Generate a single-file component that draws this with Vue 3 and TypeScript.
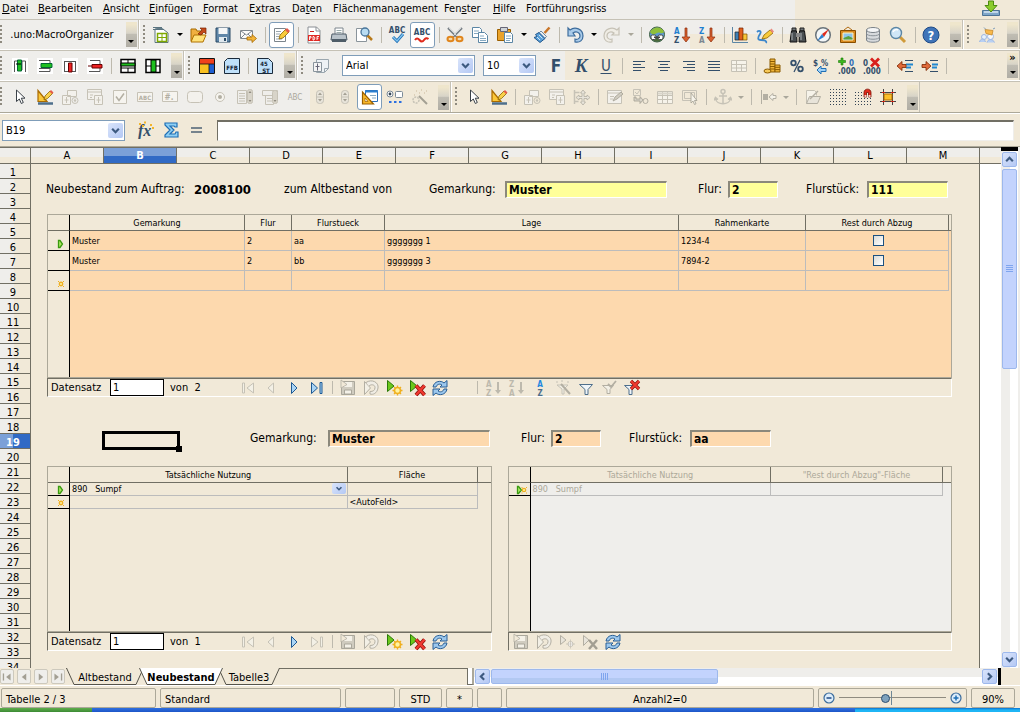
<script setup lang="ts">
import { ref } from 'vue'

interface Tool {
  kind: 'icon' | 'sep'
  name?: string
  label?: string
  active?: boolean
  arrow?: boolean
  dim?: boolean
}

const G = '#c6c2b6'
const D = '#334f6b'

const icons: Record<string, string> = {
  newDoc: `<path d="M1 1h8l2 2v3" fill="#6f8794"/><path d="M3 3h8l5 4v9.500H3z" fill="#fff" stroke="#5b7480"/><path d="M1 1.500h9M1 3.500h11" stroke="#5b7480"/><path d="M5.500 7.500h9v8h-9z" fill="#fff" stroke="#7fa800" stroke-width="1.500"/><path d="M5 11.500h9M10 8v8" stroke="#7fa800"/>`,
  open: `<path d="M2 15V3h5l1 2h5v10z" fill="#f0b040" stroke="#a66a00"/><path d="M2 16l3-7h12l-3 7z" fill="#ffe27a" stroke="#b07000"/><path d="M9 8l4-4-2-2h6v6l-2-2-3 3z" fill="#c44a1a" stroke="#7a2400" stroke-width=".7"/>`,
  save: `<path d="M2 2h14v14H2z" fill="#5f86a8" stroke="#2b4a66"/><path d="M4.500 2h9v6h-9z" fill="#f4f6f7"/><path d="M5 11h8v5H5z" fill="#dfe8ee"/><path d="M10 12h2v3h-2z" fill="#2b4a66"/>`,
  saveDim: `<path d="M2.500 2.500h13v13h-13z" fill="#d0ccc0" stroke="#aaa79b"/><path d="M5 3h8v5H5z" fill="#f4f1e8"/><path d="M5.500 11h7v4h-7z" fill="#f4f1e8" stroke="#aaa79b"/><path d="M2 1l6 4.500L2 9z" fill="#f1e9d8" stroke="#b3afa3" stroke-width=".8"/>`,
  mail: `<path d="M1.500 4.500h12v8h-12z" fill="#fbfbfb" stroke="#808890"/><path d="M2 5l5.500 4L13 5M2 12l4-4M13 12L9 8" fill="none" stroke="#808890"/><path d="M8 11h5V8.500l4.500 4-4.500 4V14H8z" fill="#f3b53a" stroke="#a86a00" stroke-width=".8"/>`,
  edit: `<path d="M2.500 2.500h11v13h-11z" fill="#fff" stroke="#7b858c"/><path d="M4 5.500h5M4 8h4M4 10.500h3M4 13h6" stroke="#9aa6ae"/><path d="M7 13l1-4 6-6 3 3-6 6z" fill="#f8ca3a" stroke="#8d6500" stroke-width=".8"/><path d="M13 4l2-2 3 3-2 2z" fill="#e4594a"/>`,
  pdf: `<path d="M3 1h8.500L15 4.500V17H3z" fill="#fff" stroke="#8a8f94"/><path d="M11 1v4h4" fill="none" stroke="#8a8f94"/><path d="M5 5.500h4" stroke="#c22"/><path d="M3 9h12v6H3z" fill="#e02a24"/><path d="M4.500 14v-3.500H6V12H4.500M8 14v-3.500h1L10 12l-1 2zM12 14v-3.500h2M12 12.200h1.500" stroke="#fff" fill="none" stroke-width=".9"/>`,
  print: `<path d="M5 2h8v8H5z" fill="#fff" stroke="#7c868d"/><path d="M6.500 4.500h5M6.500 6.500h5" stroke="#9aa"/><path d="M2 8h14l1 6H1z" fill="#b9c3ca" stroke="#4e5d68"/><path d="M2 13h14v3H2z" fill="#4e5d68"/>`,
  preview: `<path d="M1.500 2.500h10v13h-10z" fill="#fff" stroke="#8a949b"/><path d="M12 9l5 5" stroke="#b87a1a" stroke-width="2.500"/><circle cx="10" cy="6" r="4" fill="#b8dcf2" stroke="#47749a" stroke-width="1.300"/>`,
  cut: `<path d="M2 2l9 9M16 2l-9 9" stroke="#7b8288" stroke-width="2.200"/><path d="M3 2l8 8M15 2l-8 8" stroke="#e6e9eb" stroke-width=".8"/><ellipse cx="4.500" cy="13" rx="3" ry="2.300" fill="#f6d9a8" stroke="#e0851c" stroke-width="2"/><ellipse cx="13.500" cy="13" rx="3" ry="2.300" fill="#f6d9a8" stroke="#e0851c" stroke-width="2"/>`,
  copy: `<path d="M1.500 1.500h7l2 2v8h-9z" fill="#fff" stroke="#5b86a5"/><path d="M3 5h5M3 7.500h5" stroke="#86a9c1"/><path d="M7.500 6.500h6l3 3v7h-9z" fill="#fff" stroke="#5b86a5"/><path d="M9 10h4M9 12.500h6M9 14.500h6" stroke="#86a9c1"/>`,
  paste: `<path d="M1.500 3.500h13v11h-13z" fill="#eaa32b" stroke="#9b5f00"/><path d="M4.500 1.500h7v4h-7z" fill="#cfd4d7" stroke="#667"/><path d="M8.500 6.500h6l2 2v8h-8z" fill="#fff" stroke="#5b86a5"/><path d="M10 10h5M10 12.500h5M10 14.500h4" stroke="#86a9c1"/>`,
  brush: `<path d="M11.500 7l5-5.500" stroke="#c9762a" stroke-width="2.500"/><path d="M8 5l5.500 5.500-2 2L6 7z" fill="#e9edf0" stroke="#4e6f8c" stroke-width=".8"/><path d="M6 6.500l6 6-5 4-6-5 3-1-1.500-2z" fill="#5aa0d8" stroke="#20568c"/><path d="M4 11l3 3M6 9l3.500 3.500" stroke="#cfe6f7"/>`,
  undo: `<path d="M2 2l2 2c5-4 13-1 13 6 0 4-3 7-8 6v-3c3 1 5-1 5-3 0-4-4-5-7-3l2 3H2z" fill="#a9cbea" stroke="#3c6c9c" stroke-width="1.200"/>`,
  redo: `<path d="M16 2l-2 2C9 0 1 3 1 10c0 4 3 7 8 6v-3c-3 1-5-1-5-3 0-4 4-5 7-3L9 9h7z" fill="#f0ede5" stroke="${G}" stroke-width="1.200"/>`,
  globe: `<circle cx="9" cy="8.500" r="7.500" fill="#5f9ad0" stroke="#3d5d3d"/><path d="M2 6c3-6 12-6 14 0-3 3-4-1-7 1S4 9 2 6z" fill="#8fc03a"/><path d="M3 12c3-2 9-2 12 0-3 5-9 5-12 0z" fill="#4a6a3a"/><rect x="3" y="9" width="5" height="4.500" rx="1.500" fill="#fff" stroke="#444"/><rect x="10" y="9" width="5" height="4.500" rx="1.500" fill="#fff" stroke="#444"/><path d="M6 11.300h6" stroke="#444" stroke-width="1.500"/>`,
  sortAZ: `<text x="1" y="8" class="g" fill="#1f7fd0">A</text><text x="1" y="17" class="g" fill="#334f6b">Z</text><path d="M12 2h2v9h3l-4 5-4-5h3z" fill="#d9612e" stroke="#8a2d0c" stroke-width=".7"/>`,
  sortZA: `<text x="1" y="8" class="g" fill="#1f7fd0">Z</text><text x="1" y="17" class="g" fill="#7c8791">A</text><path d="M12 2h2v9h3l-4 5-4-5h3z" fill="#d9612e" stroke="#8a2d0c" stroke-width=".7"/>`,
  chart: `<path d="M1.500 1v15.500H17" fill="none" stroke="#5b86a5"/><path d="M4 6h4v8H4z" fill="#3c7fb5" stroke="#222" stroke-width=".7"/><path d="M8 2h4v12H8z" fill="#e0601c" stroke="#702000" stroke-width=".7"/><path d="M12 8h4v6h-4z" fill="#f8c63a" stroke="#805000" stroke-width=".7"/>`,
  draw: `<path d="M1 6c2-2 5-1 3 2s-3 6 1 6 6 1 5 3" fill="none" stroke="#3c87cc" stroke-width="1.800"/><path d="M6 13l2-4 6-5 3 3-6 5z" fill="#f8ca3a" stroke="#8d6500" stroke-width=".8"/><path d="M14 4l1.500-1.500 2.500 3L16.500 7z" fill="#e98a80"/>`,
  binoc: `<path d="M3 2h4v3H3zM11 2h4v3h-4z" fill="#6f7477" stroke="#222"/><path d="M2.500 5h5L8 16H1zM10.500 5h5L17 16h-7z" fill="#4a4f52" stroke="#111"/><path d="M7 7h4v4H7z" fill="#888"/><path d="M3 7v7M12 7v7" stroke="#aeb4b7"/>`,
  compass: `<circle cx="9" cy="9" r="7.300" fill="#f3f6f8" stroke="#6a747b" stroke-width="1.500"/><path d="M15 3l-5 8-2-3z" fill="#e02a1c"/><path d="M3 15l5-7 2 3z" fill="#2b7fd0"/>`,
  gallery: `<path d="M5 4l4-3 4 3" fill="none" stroke="#b06a10"/><path d="M1.500 4.500h15v12h-15z" fill="#d98b20" stroke="#8a4f00"/><path d="M4 7h10v7H4z" fill="#8fc4ea" stroke="#fff3c0"/><path d="M4.500 13.500v-1.500l5-2 4 2v1.500z" fill="#5aa03c"/>`,
  db: `<path d="M2.500 4v10c0 3 13 3 13 0V4z" fill="#d7dadd" stroke="#7b8288"/><ellipse cx="9" cy="4" rx="6.500" ry="2.500" fill="#f5f6f7" stroke="#7b8288"/><path d="M2.500 7.500c0 3 13 3 13 0M2.500 11c0 3 13 3 13 0" fill="none" stroke="#8d949a"/>`,
  zoom: `<path d="M11 11l5 5" stroke="#d09a3a" stroke-width="3"/><circle cx="7" cy="7" r="5.500" fill="#cfe6f7" stroke="#5b86a5" stroke-width="1.400"/><path d="M4 6c1-2 3-3 5-2" stroke="#fff" fill="none" stroke-width="1.500"/>`,
  help: `<circle cx="9" cy="9" r="8" fill="#3f74b8" stroke="#1f4a86"/><text x="9" y="14" text-anchor="middle" class="b" fill="#fff">?</text>`,
  ext: `<circle cx="6" cy="11" r="2.500" fill="#e8f2fb" stroke="#9db8e4"/><circle cx="12.500" cy="10.500" r="3" fill="#f4f8fd" stroke="#9db8e4"/><path d="M1.500 16c1-4 5-4 6 0M9 16.500c1-4 6-4 7.500 0" fill="#b8d0f4" stroke="#9db8e4"/><path d="M7 3.500l8 1-1 4.500-6-1.500z" fill="#f8b84a" stroke="#c98a2a" stroke-width=".8"/><path d="M6 1.500l2 2M15 3l2-1" stroke="#7f9db9"/>`,
  download: `<path d="M.5 11.500h17v5H.5z" fill="#7fa6c9" stroke="#4d7396"/><path d="M2 13h14" stroke="#d7e6f2" stroke-width="1.500"/><path d="M6.500 2h5v4.500H15L9 13 3 6.500h3.500z" fill="#8ccc2c" stroke="#4c8a10"/>`,
  colIns: `<path d="M1 1h16v16H1z" fill="#fff"/><path d="M3.500 15V4h11v11M7 4v9M11 4v9" fill="none" stroke="#555"/><path d="M6.500 3h4v11h-4z" fill="#1fc01f" stroke="#063"/><path d="M5 7h5" stroke="#000"/>`,
  rowIns: `<path d="M1 1h16v16H1z" fill="#fff"/><path d="M3 3.500h11v3M3 14.500h11v-4M3 11.500h11" fill="none" stroke="#555"/><path d="M5 6.500h11v4H5z" fill="#1fc01f" stroke="#063"/>`,
  colDel: `<path d="M1 1h16v16H1z" fill="#fff"/><path d="M3.500 4v11M14.500 4v11M3.500 4.500h11M3 14.500h11" fill="none" stroke="#555"/><path d="M7.500 6h3.500v9H7.500z" fill="#e22" stroke="#600"/>`,
  rowDel: `<path d="M1 1h16v16H1z" fill="#fff"/><path d="M4 3.500h10v11H3" fill="none" stroke="#555"/><path d="M6 7.500h10v3.500H6z" fill="#e22" stroke="#600"/><path d="M2 9h4" stroke="#600"/>`,
  rowSel: `<path d="M2 2.500h14v13H2z" fill="#fff" stroke="#000" stroke-width="1.500"/><path d="M2 6h14v3H2zM2 11h14" fill="#1fc01f" stroke="#000"/><path d="M9 2v4M9 11v5" stroke="#000"/>`,
  colSel: `<path d="M2 2.500h14v13H2z" fill="#fff" stroke="#000" stroke-width="1.500"/><path d="M7 3h5v12H7z" fill="#1fc01f" stroke="#000"/><path d="M2 9h5M12 9h4" stroke="#000"/>`,
  fill: `<path d="M1.500 1.500h15v15h-15z" fill="#fff" stroke="#111"/><path d="M2 2h14v5H2z" fill="#f0401c"/><path d="M2 7h9v9H2z" fill="#f8c020"/><path d="M11 7h5v9h-5z" fill="#1f5fd0"/><path d="M2 7h14M11 7v9" stroke="#111" stroke-width=".8"/>`,
  ffb: `<path d="M4.500 1.500h12v15h-15v-12z" fill="#bfe0fa" stroke="#1a2a3a"/><text x="9" y="13" text-anchor="middle" class="s" fill="#123">FFB</text>`,
  doc45: `<path d="M1.500 1.500h11l4 4v11h-15z" fill="#bfe0fa" stroke="#1a2a3a"/><text x="8" y="8.500" text-anchor="middle" class="s" fill="#123">45</text><text x="10" y="15.500" text-anchor="middle" class="s" fill="#123">ST</text>`,
  formDoc: `<path d="M4.500 2.500h12v9l-4 4h-8z" fill="#eef2f5" stroke="#9aa6ae"/><path d="M12.500 15v-3.500h4" fill="none" stroke="#9aa6ae"/><path d="M1.500 5.500h8v9h-8z" fill="#f4f4f4" stroke="#89949c"/><path d="M5.500 6.500v7M3.500 9.500h4" stroke="#667"/>`,
  alignL: `<path d="M3 4.500h12M3 7.500h8M3 10.500h12M3 13.500h8" stroke="${D}"/>`,
  alignC: `<path d="M3 4.500h12M5 7.500h8M3 10.500h12M5 13.500h8" stroke="${D}"/>`,
  alignR: `<path d="M3 4.500h12M7 7.500h8M3 10.500h12M7 13.500h8" stroke="${D}"/>`,
  alignJ: `<path d="M3 4.500h12M3 7.500h12M3 10.500h12M3 13.500h12" stroke="${D}"/>`,
  tableDim: `<path d="M1.500 3.500h15v11h-15zM1.500 7.500h15M1.500 11h15M6.500 3v12M11.500 7v7" fill="#f6f3ea" stroke="${G}"/>`,
  coins: `<path d="M7 2h5v13H7z" fill="#f0b53a" stroke="#8a5a00"/><path d="M7 4.500h5M7 7h5M7 9.500h5M7 12h5" stroke="#8a5a00"/><ellipse cx="4.500" cy="14" rx="3.500" ry="2" fill="#f6c95a" stroke="#8a5a00"/><path d="M12 8h5v7h-5z" fill="#f0b53a" stroke="#8a5a00"/><path d="M12 10.300h5M12 12.600h5" stroke="#8a5a00"/>`,
  percent: `<circle cx="5.500" cy="6" r="2.300" fill="none" stroke="${D}" stroke-width="1.800"/><circle cx="12.500" cy="12" r="2.300" fill="none" stroke="${D}" stroke-width="1.800"/><path d="M12 3L6 15" stroke="${D}" stroke-width="1.300"/>`,
  stdFmt: `<text x="0" y="8.500" class="g" fill="${D}">$</text><text x="8" y="8.500" class="g" fill="${D}">%</text><path d="M4 13l4-4v2.500h5v3H8V17z" fill="#9fd0f5" stroke="#1f6fb5"/>`,
  decAdd: `<path d="M3 1h2v2.500h2.500v2H5V8H3V5.500H.5v-2H3z" fill="#3cb81c" stroke="#1a7a08" stroke-width=".6"/><text x="11" y="9" class="g" fill="#2f6fb8">0</text><text x="0" y="17" class="s7" fill="${D}">.000</text>`,
  decDel: `<text x="0" y="9" class="g" fill="${D}">0</text><text x="0" y="17" class="s7" fill="${D}">.000</text><path d="M8 1.500l8 8M16 1.500l-8 8" stroke="#d8201c" stroke-width="2.800"/>`,
  outdent: `<path d="M9 3.500h8M9 14.500h8" stroke="${D}"/><path d="M10 7.500h7M10 10.500h5" stroke="#1f87d0" stroke-width="2"/><path d="M1 9l5-4.500v3h4v3H6v3z" fill="#e06a3a" stroke="#7a2400" stroke-width=".8"/>`,
  indent: `<path d="M9 3.500h8M9 14.500h8" stroke="${D}"/><path d="M11 7.500h6M11 10.500h5" stroke="#1f87d0" stroke-width="2"/><path d="M10 9L5 4.500v3H1v3h4v3z" fill="#e06a3a" stroke="#7a2400" stroke-width=".8"/>`,
  cursor: `<path d="M5.500 2v11.500l2.800-2.500 2 4.500 2-1-2-4.300h3.700z" fill="#fff" stroke="#3a4148"/>`,
  design: `<path d="M2 15.500h15" stroke="#4e6f8c" stroke-width="2.500"/><path d="M2 13.500V2.500l9 11z" fill="#fbc73a" stroke="#a86a00" stroke-width="1.200"/><path d="M8 12l1-4 5-5 2.500 2.500-5 5z" fill="#f8d04a" stroke="#8d6500" stroke-width=".8"/><path d="M13.500 3.500L15 2l2.500 2.500L16 6z" fill="#e4594a"/>`,
  ctrl: `<path d="M6.500 2.500h9v6h-9zM1.500 7.500h8v9h-8zM5.500 9v6M3.500 12h4" fill="#f3f1ec" stroke="${G}"/><circle cx="14" cy="12.500" r="3" fill="none" stroke="${G}"/><circle cx="14" cy="12.500" r="1.200" fill="${G}"/>`,
  form: `<path d="M1.500 1.500h14v10h-14zM1.500 4h14M4 7h3M4 9.500h2" fill="#f3f1ec" stroke="${G}"/><path d="M8.500 7.500h8v9h-8zM12.500 9v6M10.500 12h4" fill="#f3f1ec" stroke="${G}"/>`,
  check: `<path d="M2.500 2.500h13v13h-13z" fill="#f6f4ef" stroke="${G}"/><path d="M5 8.500l3 4 5-7" fill="none" stroke="#b3afa3" stroke-width="1.500"/>`,
  abcBox: `<path d="M1.500 4.500h15v9h-15z" fill="#f6f4ef" stroke="${G}"/><text x="9" y="11.500" text-anchor="middle" class="s" fill="#b3afa3">ABC</text>`,
  numBox: `<path d="M1.500 3.500h15v10h-15z" fill="#f6f4ef" stroke="${G}"/><text x="8" y="11.500" text-anchor="middle" class="g" fill="#b3afa3">#.</text>`,
  btn: `<rect x="1.500" y="3.500" width="15" height="11" rx="3" fill="#f3f1ec" stroke="${G}"/>`,
  radio: `<circle cx="9" cy="9" r="4.500" fill="#f6f4ef" stroke="${G}"/><circle cx="9" cy="9" r="2" fill="#b3afa3"/>`,
  listBox: `<path d="M1.500 2.500h9v13h-9zM3 5.500h6M3 8h6M3 10.500h6M3 13h6" fill="none" stroke="${G}"/><rect x="11.500" y="1.500" width="5" height="14" rx="2" fill="#d8d4c9" stroke="${G}"/><path d="M12.500 5l1.500-2 1.500 2zM12.500 12l1.500 2 1.500-2z" fill="#8f8b80"/>`,
  combo: `<path d="M1.500 2.500h15v5h-15zM4.500 7.500v9h8v-9M6 10.500h5M6 13h5" fill="none" stroke="${G}"/><rect x="11.500" y="2.500" width="5" height="13" rx="2" fill="#d8d4c9" stroke="${G}"/><path d="M12.500 12l1.500 2 1.500-2z" fill="#8f8b80"/>`,
  abc: `<text x="9" y="12" text-anchor="middle" class="m" fill="#aaa79b">ABC</text>`,
  spin: `<rect x="5.500" y="2.500" width="7" height="13" rx="3" fill="#e8e4da" stroke="${G}"/><path d="M5 9h8" stroke="${G}"/><path d="M7 7l2-2.500L11 7zM7 11l2 2.500 2-2.500z" fill="#a39f93"/>`,
  designOn: `<path d="M4.500 2.500h12v11h-12z" fill="#fff" stroke="#2b6fb8"/><path d="M4 3.500h13" stroke="#2b7fd0" stroke-width="2"/><path d="M9 7.500h6M11 10h4" stroke="#86a9c1"/><path d="M1.500 16V4l11 12z" fill="#f8b82a" stroke="#9b5f00" stroke-width="1.200"/><path d="M4 13.500V10l3 3.500z" fill="#fff" stroke="#9b5f00" stroke-width=".7"/>`,
  more: `<circle cx="4" cy="6" r="3" fill="#fff" stroke="#7b8a96"/><circle cx="4" cy="6" r="1.400" fill="#345"/><rect x="9.500" y="3.500" width="7" height="6" rx="1" fill="#fff" stroke="#7b8a96"/><path d="M3 14h2.500M8 14h2.500M13 14h2.500" stroke="#2b6fe0" stroke-width="2"/>`,
  wand: `<path d="M8 8l8 8" stroke="#a39f93" stroke-width="2"/><path d="M5 3h1M10 2h1M13 5h1M3 7h1M8 5h1M15 3h1" stroke="#c9b89a" stroke-width="1.200"/><circle cx="5" cy="12" r="3" fill="none" stroke="${G}" stroke-width="1.500" stroke-dasharray="2 1"/>`,
  move: `<path d="M1.500 2v14M1.500 4.500h5M1.500 13.500h4" stroke="${G}" stroke-width="1.500"/><path d="M10 2l2.500 3H11v3.500h3V7l3 2.500-3 2.500v-1.500h-3V14h1.500L10 17l-2.500-3H9v-3.500H6V12L3 9.500 6 7v1.500h3V5H7.500z" fill="#e8e4da" stroke="#b3afa3" stroke-width=".8"/>`,
  formPen: `<path d="M1.500 2.500h14v13h-14zM1.500 5h14M4 8.500h4M4 11h3" fill="#f3f1ec" stroke="${G}"/><path d="M7 13l2-4 6-5 2 2-6 5z" fill="#d0ccc0" stroke="#a39f93" stroke-width=".8"/>`,
  tabOrder: `<path d="M2.500 1.500h7v6h-7zM4 4l2 2 3-4" fill="none" stroke="${G}"/><path d="M3 9v4h6v2.500l3-3.500-3-3.500V11H5V9z" fill="#d8d4c9" stroke="#a39f93" stroke-width=".8"/><circle cx="14.500" cy="13" r="2.500" fill="none" stroke="#b3afa3"/>`,
  addField: `<path d="M1.500 3.500h15v12h-15zM1.500 7.500h15M1.500 11.500h15M6.500 3.500v12M11.500 3.500v12" fill="#f6f3ea" stroke="${G}"/><path d="M2 5.500h14" stroke="#d8d4c9" stroke-width="2"/>`,
  selDim: `<path d="M1.500 2.500h14v10h-14zM3.500 4.500h10v6h-10z" fill="none" stroke="${G}"/><path d="M10 5v10l2-2 1.500 3.500 1.500-.7-1.500-3.300H16z" fill="#f6f3ea" stroke="#a39f93" stroke-width=".8"/>`,
  anchor: `<circle cx="9" cy="3.500" r="2" fill="none" stroke="${G}" stroke-width="1.500"/><path d="M9 5.500V16M5 8h8M1.500 10.500c1 7 14 7 15 0M0 12.500l1.500-3 2.500 2M18 12.500l-1.500-3-2.500 2" fill="none" stroke="${G}" stroke-width="1.500"/>`,
  alignObj: `<path d="M2.500 2v14" stroke="#b3afa3"/><path d="M4 6h5v6H4z" fill="#b3afa3"/><path d="M10 9l4-3.500v2h3v3h-3v2z" fill="#f6f3ea" stroke="#b3afa3"/>`,
  folderDim: `<path d="M2.500 15.500v-13h8l2 2v3" fill="#f6f3ea" stroke="${G}"/><path d="M2.500 15.500l3-7h11l-3 7z" fill="#e8e4da" stroke="#b3afa3"/><path d="M6 11l8-8" stroke="#b3afa3" stroke-width="1.500"/>`,
  gridPts: `<path d="M1 1.500h16M1 4.500h16M1 7.500h16M1 10.500h16M1 13.500h16M1 16.500h16" stroke="#345" stroke-dasharray="1 2"/>`,
  gridSnap: `<path d="M1 4.500h8M1 7.500h8M1 10.500h16M1 13.500h16M1 16.500h16" stroke="#345" stroke-dasharray="1 2"/><path d="M10 9V4.500c0-4.500 7-4.500 7 0V9h-2.500V4.500h-2V9z" fill="#e02a1c" stroke="#7a0c00" stroke-width=".8"/><path d="M10.500 8h2M14.500 8h2" stroke="#fff" stroke-width="1.500"/>`,
  guides: `<path d="M1 4.500h16M1 13.500h16M4.500 1v16M13.500 1v16" stroke="#444"/><path d="M5 6h8v6H5z" fill="#fbc02a" stroke="#b06a00"/><path d="M3 4.500h3M12 4.500h3M3 13.500h3M12 13.500h3" stroke="#d02010"/>`,
  spell: `<text x="9" y="7" text-anchor="middle" class="g" fill="${D}">ABC</text><path d="M5 11l4 4 6-7" fill="none" stroke="#1f6fb5" stroke-width="3"/><path d="M5 11l4 4 6-7" fill="none" stroke="#7fc4f0" stroke-width="1.300"/>`,
  autoSpell: `<text x="9" y="9" text-anchor="middle" class="g" fill="${D}">ABC</text><path d="M2 14q2-3 4.500 0t4.500 0 4.500-1" fill="none" stroke="#e02a1c" stroke-width="2"/>`,
  bold: `<text x="9" y="15" text-anchor="middle" class="f" fill="${D}">F</text>`,
  italic: `<text x="9" y="15" text-anchor="middle" class="k" fill="${D}">K</text>`,
  under: `<text x="9" y="14" text-anchor="middle" class="u" fill="${D}">U</text><path d="M3.500 16.500h11" stroke="${D}"/>`,
  fx: `<text x="1" y="15" class="fx" fill="#334f6b">fx</text><path d="M2 3h2M7 1.500h2M5 5h2M13 4h2M15 7h2" stroke="#f3b52a" stroke-width="1.800"/>`,
  sum: `<path d="M3 2h12v4h-2l-1-1H8l4 4-4 4h5l1-2h2v5H3v-2l5-5-5-5z" fill="#8fd0f5" stroke="#1f6fb5" stroke-width="1.200"/>`,
  equal: `<path d="M4 7h11M4 11h11" stroke="#4e6274" stroke-width="1.600"/>`,
  first: `<path d="M3.500 4v10h2V4zM14.500 4L8 9l6.500 5z" fill="#f3f0e6" stroke="${G}"/>`,
  prev: `<path d="M11.500 4L6 9l5.500 5z" fill="#f3f0e6" stroke="${G}"/>`,
  next: `<path d="M6.500 3.500L12 9l-5.500 5.500z" fill="#a9d4f5" stroke="#1f5a94"/>`,
  last: `<path d="M3.500 3.500L9.500 9l-6 5.500zM12 3.500v11h2v-11z" fill="#a9d4f5" stroke="#1f5a94"/>`,
  lastDim: `<path d="M3.500 4L10 9l-6.500 5zM12.500 4v10h2V4z" fill="#f3f0e6" stroke="${G}"/>`,
  undoDim: `<path d="M2.500 2.500v13l6-6.500z" fill="#f3f0e6" stroke="#b3afa3"/><path d="M4 3.500c6-4 13 0 12 5.500s-5 7-8 6v-2.500c3 0 5-1 5-4S9 5 7 7" fill="#f0ede5" stroke="#b3afa3"/>`,
  recNew: `<path d="M2.500 1.500v11L9 7z" fill="#6cc81c" stroke="#2a7a08"/><circle cx="12.500" cy="11.500" r="3" fill="#fff3a0" stroke="#f0b020" stroke-width="1.600"/><path d="M12.500 6.500v1.500M12.500 15v1.500M7.500 11.500H9M16 11.500h1.500M9 8l1 1M16 8l-1 1M9 15l1-1M16 15l-1-1" stroke="#f0b020" stroke-width="1.300"/>`,
  recNewDim: `<path d="M2.500 2.500v9L8 7z" fill="#e8e4da" stroke="#b3afa3"/><circle cx="12.500" cy="11" r="2.500" fill="#fff" stroke="${G}"/><path d="M12.500 6.500v9M8 11h9" stroke="${G}" stroke-width=".8"/>`,
  recDel: `<path d="M2.500 1.500v11L9 7z" fill="#6cc81c" stroke="#2a7a08"/><path d="M8 6.500l8.500 9.500M16.500 6.500L8 16" stroke="#8a0c08" stroke-width="3.800"/><path d="M8 6.500l8.500 9.500M16.500 6.500L8 16" stroke="#f03a30" stroke-width="2.400"/>`,
  recDelDim: `<path d="M2.500 2.500v10L8 7z" fill="#e8e4da" stroke="#b3afa3"/><path d="M8 7l8 9M16 7l-8 9" stroke="#a39f93" stroke-width="2.500"/>`,
  refresh: `<path d="M2 8c1-6 8-7 11-4l3-2.500V8H9l2-2C9 4.500 6 5 5 8zM16 10c-1 6-8 7-11 4l-3 2.500V10h7l-2 2c2 1.500 5 1 6-2z" fill="#9cc8ee" stroke="#2b5f94"/>`,
  azDim: `<text x="1" y="8" class="g" fill="#bdb9ad">A</text><text x="1" y="17" class="g" fill="#bdb9ad">Z</text><path d="M12 3h2v8h2l-3 4-3-4h2z" fill="#bdb9ad"/>`,
  zaDim: `<text x="1" y="8" class="g" fill="#bdb9ad">Z</text><text x="1" y="17" class="g" fill="#bdb9ad">A</text><path d="M12 3h2v8h2l-3 4-3-4h2z" fill="#bdb9ad"/>`,
  az: `<text x="9" y="8" text-anchor="middle" class="g" fill="#1f87e0">A</text><text x="9" y="17" text-anchor="middle" class="g" fill="#4e6f8c">Z</text>`,
  filterWand: `<path d="M3 6h11L10 10v5H8v-5z" fill="#f3f0e6" stroke="${G}"/><path d="M7 5l9 10" stroke="#b3afa3" stroke-width="2"/><path d="M2 3h2M7 2h2M13 3h2" stroke="${G}"/>`,
  filter: `<path d="M2.500 5.500h13L11 10.500v5H8v-5z" fill="#eef4f8" stroke="#4e6f8c"/>`,
  filterDim: `<path d="M2.500 6.500h11L10 10.500v4H7v-4z" fill="#f3f0e6" stroke="#b3afa3"/><path d="M8 5l3 3 5-6" fill="none" stroke="#b3afa3" stroke-width="1.800"/>`,
  filterDel: `<path d="M1.500 6.500h11L9 10.500v5H6v-5z" fill="#eef4f8" stroke="#4e6f8c"/><path d="M8 2l8 8M16 2l-8 8" stroke="#8a0c08" stroke-width="3.200"/><path d="M8 2l8 8M16 2l-8 8" stroke="#f03a30" stroke-width="2"/>`,
  chev: `<path d="M5 7l4 4 4-4" fill="none" stroke="#3d5a80" stroke-width="2.600"/>`,
  chevUp: `<path d="M5 11l4-4 4 4" fill="none" stroke="#3d5a80" stroke-width="2.600"/>`,
  chevL: `<path d="M11 5L7 9l4 4" fill="none" stroke="#3d5a80" stroke-width="2.600"/>`,
  chevR: `<path d="M7 5l4 4-4 4" fill="none" stroke="#3d5a80" stroke-width="2.600"/>`,
  tabFirst: `<path d="M5 5v8" stroke="#a39f93" stroke-width="1.500"/><path d="M13 5v8L8 9z" fill="#a39f93"/>`,
  tabPrev: `<path d="M11.500 5v8l-5-4z" fill="#a39f93"/>`,
  tabNext: `<path d="M6.500 5v8l5-4z" fill="#a39f93"/>`,
  tabLast: `<path d="M5 5v8l5-4z" fill="#a39f93"/><path d="M13 5v8" stroke="#a39f93" stroke-width="1.500"/>`,
  rowCur: `<path d="M8.500 5.500v7h1.500l2.500-3.500-2.500-3.500z" fill="#a8e860" stroke="#3a9a10" stroke-width="1.300"/>`,
  rowNew: `<circle cx="11" cy="9" r="1.700" fill="#fff3a0" stroke="#f0b020" stroke-width="1.400"/><path d="M8 6.500h1M13 6.500h1M8 11.500h1M13 11.500h1" stroke="#f0b020" stroke-width="1.200"/>`,
  rowCurNew: `<path d="M6.500 5.500v7h1l3-3.500-3-3.500z" fill="#a8e860" stroke="#3a9a10" stroke-width="1.300"/><circle cx="13" cy="9" r="1.700" fill="#fff3a0" stroke="#f0b020" stroke-width="1.300"/><path d="M10.500 6.500h1M15 6.500h1M10.500 12h1M15 12h1" stroke="#f0b020" stroke-width="1.200"/>`,
  minus: `<circle cx="9" cy="9" r="5" fill="#dcecfa" stroke="#3c6c9c" stroke-width="1.200"/><path d="M6.500 9h5" stroke="#1f4a86" stroke-width="1.500"/>`,
  plus: `<circle cx="9" cy="9" r="5" fill="#dcecfa" stroke="#3c6c9c" stroke-width="1.200"/><path d="M6.500 9h5M9 6.500v5" stroke="#1f6fb5" stroke-width="1.500"/>`,
}

const sep: Tool = { kind: 'sep' }
const t = (name: string, label: string, extra: Partial<Tool> = {}): Tool => ({ kind: 'icon', name, label, ...extra })

const menu: { pre: string; key: string; post: string }[] = [
  { pre: '', key: 'D', post: 'atei' },
  { pre: '', key: 'B', post: 'earbeiten' },
  { pre: '', key: 'A', post: 'nsicht' },
  { pre: '', key: 'E', post: 'infügen' },
  { pre: '', key: 'F', post: 'ormat' },
  { pre: 'E', key: 'x', post: 'tras' },
  { pre: 'Da', key: 't', post: 'en' },
  { pre: 'Flächenmanagement', key: '', post: '' },
  { pre: 'Fen', key: 's', post: 'ter' },
  { pre: '', key: 'H', post: 'ilfe' },
  { pre: 'Fortführungsriss', key: '', post: '' },
]

const standard: Tool[] = [
  t('newDoc', 'Neu', { arrow: true }), t('open', 'Öffnen'), t('save', 'Speichern'), t('mail', 'E-Mail'), sep,
  t('edit', 'Datei bearbeiten', { active: true }), sep,
  t('pdf', 'PDF'), t('print', 'Drucken'), t('preview', 'Seitenansicht'), sep,
  t('spell', 'Rechtschreibung'), t('autoSpell', 'Automatische Rechtschreibprüfung', { active: true }), sep,
  t('cut', 'Ausschneiden'), t('copy', 'Kopieren'), t('paste', 'Einfügen', { arrow: true }), t('brush', 'Format übertragen'), sep,
  t('undo', 'Rückgängig', { arrow: true }), t('redo', 'Wiederherstellen', { arrow: true, dim: true }), sep,
  t('globe', 'Hyperlink'), t('sortAZ', 'Aufsteigend'), t('sortZA', 'Absteigend'), sep,
  t('chart', 'Diagramm'), t('draw', 'Zeichnen'), sep,
  t('binoc', 'Suchen'), t('compass', 'Navigator'), t('gallery', 'Gallery'), t('db', 'Datenquellen'), t('zoom', 'Maßstab'), sep,
  t('help', 'Hilfe'),
]
const rowsBar: Tool[] = [
  t('colIns', 'Spalte einfügen'), t('rowIns', 'Zeile einfügen'), t('colDel', 'Spalte löschen'), t('rowDel', 'Zeile löschen'), sep,
  t('rowSel', 'Zeilen'), t('colSel', 'Spalten'),
]
const ffbBar: Tool[] = [t('fill', 'Farben'), t('ffb', 'FFB'), sep, t('doc45', 'Zahlen')]
const formatBar: Tool[] = [
  t('bold', 'Fett'), t('italic', 'Kursiv'), t('under', 'Unterstrichen'), sep,
  t('alignL', 'Linksbündig'), t('alignC', 'Zentriert'), t('alignR', 'Rechtsbündig'), t('alignJ', 'Blocksatz'), t('tableDim', 'Zellen verbinden'), sep,
  t('coins', 'Währung'), t('percent', 'Prozent'), t('stdFmt', 'Standardformat'), t('decAdd', 'Dezimalstelle hinzufügen'), t('decDel', 'Dezimalstelle löschen'), sep,
  t('outdent', 'Einzug vermindern'), t('indent', 'Einzug erhöhen'), sep,
]
const controlsBar: Tool[] = [
  ['cursor', 'Auswahl'], ['design', 'Entwurfsmodus'], ['ctrl', 'Kontrollfeld'], ['form', 'Formular'], ['check', 'Markierfeld'],
  ['abcBox', 'Textfeld'], ['numBox', 'Formatiertes Feld'], ['btn', 'Schaltfläche'], ['radio', 'Optionsfeld'], ['listBox', 'Listenfeld'],
  ['combo', 'Kombinationsfeld'], ['abc', 'Beschriftungsfeld'], ['spin', 'Drehfeld'], ['spin', 'Bildlaufleiste'], ['designOn', 'Entwurf'],
  ['more', 'Weitere Steuerelemente'], ['wand', 'Assistenten'],
].map(([n, l]) => t(n, l, { active: n === 'designOn' }))
const designBar: Tool[] = [
  t('cursor', 'Auswahl'), t('design', 'Entwurfsmodus'), sep,
  t('ctrl', 'Kontrollfeld'), t('form', 'Formular'), t('move', 'Position'), sep,
  t('formPen', 'Formular-Navigator'), t('tabOrder', 'Aktivierungsreihenfolge'), t('addField', 'Feld hinzufügen'), t('selDim', 'Automatischer Fokus'), sep,
  t('anchor', 'Verankerung', { arrow: true, dim: true }), sep,
  t('alignObj', 'Ausrichtung', { arrow: true, dim: true }), sep,
  t('folderDim', 'Im Entwurf öffnen'), t('gridPts', 'Raster'), t('gridSnap', 'Am Raster fangen'), t('guides', 'Hilfslinien'),
]

const columns = 'ABCDEFGHIJKLM'.split('')
const rowNumbers = Array.from({ length: 34 }, (_, i) => i + 1)

const parcels = ref([
  { gemarkung: 'Muster', flur: '2', flurstueck: 'aa', lage: 'ggggggg 1', karte: '1234-4', rest: false },
  { gemarkung: 'Muster', flur: '2', flurstueck: 'bb', lage: 'ggggggg 3', karte: '7894-2', rest: false },
])

const navStart = (last: string): Tool[] => [
  t('first', 'Erster Datensatz'), t('prev', 'Vorheriger Datensatz'), t('next', 'Nächster Datensatz'), t(last, 'Letzter Datensatz'), sep,
  t('saveDim', 'Datensatz speichern'), t('undoDim', 'Eingabe rückgängig'), t('recNew', 'Neuer Datensatz'), t('recDel', 'Datensatz löschen'), t('refresh', 'Aktualisieren'),
]
const navFilter: Tool[] = [
  t('azDim', 'Aufsteigend'), t('zaDim', 'Absteigend'), t('az', 'Sortieren'), t('filterWand', 'AutoFilter'),
  t('filter', 'Filter'), t('filterDim', 'Filter anwenden'), t('filterDel', 'Filter entfernen'),
]
const navEnd: Tool[] = [
  t('saveDim', 'Datensatz speichern'), t('undoDim', 'Eingabe rückgängig'), t('recNewDim', 'Neuer Datensatz'),
  t('recDelDim', 'Datensatz löschen'), t('refresh', 'Aktualisieren'),
]

const tabs = [
  { name: 'Altbestand', width: 78, active: false },
  { name: 'Neubestand', width: 84, active: true },
  { name: 'Tabelle3', width: 62, active: false },
]
const tabNav = [
  ['tabFirst', 'Erste Tabelle'], ['tabPrev', 'Vorherige Tabelle'], ['tabNext', 'Nächste Tabelle'], ['tabLast', 'Letzte Tabelle'],
]
const zoomLevel = ref(43)
</script>

<template>
  <div class="app">
    <nav class="menu">
      <a v-for="(m, i) in menu" :key="i" href="#">{{ m.pre }}<u>{{ m.key }}</u>{{ m.post }}</a>
      <button class="tool" aria-label="Aktualisierung"><svg class="ic" viewBox="0 0 18 18" v-html="icons.download"></svg></button>
    </nav>

    <div class="bar bar-1">
      <div class="seg seg-macro">
        <span class="grip"></span>
        <button class="macro">.uno:MacroOrganizer</button>
        <button class="over" aria-label="Weitere"></button>
      </div>
      <div class="seg seg-std">
        <span class="grip"></span>
        <template v-for="(x, i) in standard" :key="i">
          <i v-if="x.kind === 'sep'" class="sep"></i>
          <template v-else>
            <button class="tool" :class="{ active: x.active }" :aria-label="x.label"><svg class="ic" viewBox="0 0 18 18" v-html="icons[x.name!]"></svg></button>
            <button v-if="x.arrow" class="drop" :class="{ dim: x.dim }" :aria-label="x.label + ' Auswahl'"></button>
          </template>
        </template>
        <button class="over" aria-label="Weitere"></button>
      </div>
      <div class="seg seg-last">
        <span class="grip"></span>
        <button class="tool wide" aria-label="Erweiterung"><svg class="ic" viewBox="0 0 18 18" v-html="icons.ext"></svg></button>
        <button class="over" aria-label="Weitere"></button>
      </div>
    </div>

    <div class="bar bar-2">
      <div class="seg seg-rows">
        <span class="grip"></span>
        <template v-for="(x, i) in rowsBar" :key="i">
          <i v-if="x.kind === 'sep'" class="sep"></i>
          <button v-else class="tool" :aria-label="x.label"><svg class="ic" viewBox="0 0 18 18" v-html="icons[x.name!]"></svg></button>
        </template>
        <button class="over" aria-label="Weitere"></button>
      </div>
      <div class="seg seg-ffb">
        <span class="grip"></span>
        <template v-for="(x, i) in ffbBar" :key="i">
          <i v-if="x.kind === 'sep'" class="sep"></i>
          <button v-else class="tool" :aria-label="x.label"><svg class="ic" viewBox="0 0 18 18" v-html="icons[x.name!]"></svg></button>
        </template>
        <button class="over" aria-label="Weitere"></button>
      </div>
      <div class="seg seg-last">
        <span class="grip"></span>
        <button class="tool wide" aria-label="Formatvorlagen"><svg class="ic" viewBox="0 0 18 18" v-html="icons.formDoc"></svg></button>
        <span class="combo font">
          <select aria-label="Schriftart"><option>Arial</option></select>
          <svg class="ic cb" viewBox="0 0 18 18" v-html="icons.chev"></svg>
        </span>
        <span class="combo size">
          <select aria-label="Schriftgröße"><option>10</option></select>
          <svg class="ic cb" viewBox="0 0 18 18" v-html="icons.chev"></svg>
        </span>
        <template v-for="(x, i) in formatBar" :key="i">
          <i v-if="x.kind === 'sep'" class="sep"></i>
          <button v-else class="tool" :aria-label="x.label"><svg class="ic" viewBox="0 0 18 18" v-html="icons[x.name!]"></svg></button>
        </template>
        <button class="over more" aria-label="Weitere">»</button>
      </div>
    </div>

    <div class="bar bar-3">
      <div class="seg seg-ctrl">
        <span class="grip"></span>
        <button v-for="(x, i) in controlsBar" :key="i" class="tool" :class="{ active: x.active }" :aria-label="x.label"><svg class="ic" viewBox="0 0 18 18" v-html="icons[x.name!]"></svg></button>
        <button class="over" aria-label="Weitere"></button>
      </div>
      <div class="seg seg-design">
        <span class="grip"></span>
        <template v-for="(x, i) in designBar" :key="i">
          <i v-if="x.kind === 'sep'" class="sep"></i>
          <template v-else>
            <button class="tool" :aria-label="x.label"><svg class="ic" viewBox="0 0 18 18" v-html="icons[x.name!]"></svg></button>
            <button v-if="x.arrow" class="drop" :class="{ dim: x.dim }" :aria-label="x.label + ' Auswahl'"></button>
          </template>
        </template>
        <button class="over" aria-label="Weitere"></button>
      </div>
    </div>

    <div class="formula">
      <span class="combo name">
        <input value="B19" aria-label="Namensfeld" />
        <svg class="ic cb" viewBox="0 0 18 18" v-html="icons.chev"></svg>
      </span>
      <button class="tool" aria-label="Funktionsassistent"><svg class="ic" viewBox="0 0 18 18" v-html="icons.fx"></svg></button>
      <button class="tool" aria-label="Summe"><svg class="ic" viewBox="0 0 18 18" v-html="icons.sum"></svg></button>
      <button class="tool" aria-label="Funktion"><svg class="ic" viewBox="0 0 18 18" v-html="icons.equal"></svg></button>
      <input class="line" aria-label="Eingabezeile" />
    </div>

    <div class="work">
      <div class="sheet">
        <div class="cols">
          <span class="corner"></span>
          <span v-for="c in columns" :key="c" class="col" :class="{ sel: c === 'B' }">{{ c }}</span>
          <span class="rest"></span>
        </div>
        <div class="body">
          <div class="rows">
            <span v-for="r in rowNumbers" :key="r" :class="{ sel: r === 19 }">{{ r }}</span>
          </div>
          <main class="cells">
            <div class="line-1">
              <span class="l-auftrag">Neubestand zum Auftrag:</span>
              <b class="l-nr">2008100</b>
              <span class="l-alt">zum Altbestand von</span>
              <label class="l-gem" for="g1">Gemarkung:</label><input id="g1" class="fld w-gem yellow" value="Muster" />
              <label class="l-flur" for="f1">Flur:</label><input id="f1" class="fld w-flur yellow" value="2" />
              <label class="l-stk" for="s1">Flurstück:</label><input id="s1" class="fld w-stk yellow" value="111" />
            </div>

            <section class="panel p1">
              <div class="area orange">
                <table>
                  <colgroup><col class="c-h" /><col class="c-gem" /><col class="c-flur" /><col class="c-stk" /><col /><col class="c-karte" /><col class="c-rest" /><col class="c-end" /></colgroup>
                  <thead>
                    <tr><th></th><th>Gemarkung</th><th>Flur</th><th>Flurstueck</th><th>Lage</th><th>Rahmenkarte</th><th>Rest durch Abzug</th><th></th></tr>
                  </thead>
                  <tbody>
                    <tr v-for="(p, i) in parcels" :key="i">
                      <td class="rh"><svg v-if="i === 0" class="ic" viewBox="0 0 18 18" v-html="icons.rowCur"></svg></td>
                      <td>{{ p.gemarkung }}</td><td>{{ p.flur }}</td><td>{{ p.flurstueck }}</td><td>{{ p.lage }}</td><td>{{ p.karte }}</td>
                      <td class="mid"><input v-model="p.rest" type="checkbox" :aria-label="'Rest durch Abzug ' + p.flurstueck" /></td>
                      <td class="none"></td>
                    </tr>
                    <tr>
                      <td class="rh"><svg class="ic" viewBox="0 0 18 18" v-html="icons.rowNew"></svg></td>
                      <td></td><td></td><td></td><td></td><td></td><td></td><td class="none"></td>
                    </tr>
                  </tbody>
                </table>
              </div>
              <div class="recbar">
                <label for="r1">Datensatz</label><input id="r1" value="1" /><span class="of">von&nbsp; 2</span>
                <template v-for="(x, i) in navStart('last')" :key="i">
                  <i v-if="x.kind === 'sep'" class="sep"></i>
                  <button v-else class="tool" :aria-label="x.label"><svg class="ic" viewBox="0 0 18 18" v-html="icons[x.name!]"></svg></button>
                </template>
                <i class="sep far"></i>
                <button v-for="(x, i) in navFilter" :key="'f' + i" class="tool" :aria-label="x.label"><svg class="ic" viewBox="0 0 18 18" v-html="icons[x.name!]"></svg></button>
              </div>
            </section>

            <div class="line-2">
              <span class="cell-cursor"><i></i></span>
              <label class="l-gem" for="g2">Gemarkung:</label><input id="g2" class="fld w-gem peach" value="Muster" />
              <label class="l-flur" for="f2">Flur:</label><input id="f2" class="fld w-flur peach" value="2" />
              <label class="l-stk" for="s2">Flurstück:</label><input id="s2" class="fld w-stk peach" value="aa" />
            </div>

            <div class="pair">
              <section class="panel p2">
                <div class="area">
                  <table>
                    <colgroup><col class="c-h" /><col /><col class="c-fl" /><col class="c-end2" /></colgroup>
                    <thead><tr><th></th><th>Tatsächliche Nutzung</th><th>Fläche</th><th></th></tr></thead>
                    <tbody>
                      <tr>
                        <td class="rh"><svg class="ic" viewBox="0 2 18 12" v-html="icons.rowCur"></svg></td>
                        <td>
                          <span class="cellsel">
                            <select aria-label="Tatsächliche Nutzung"><option>890&nbsp;&nbsp; Sumpf</option></select>
                            <svg class="ic cb" viewBox="0 0 18 18" v-html="icons.chev"></svg>
                          </span>
                        </td>
                        <td></td><td class="none"></td>
                      </tr>
                      <tr>
                        <td class="rh"><svg class="ic" viewBox="0 2 18 12" v-html="icons.rowNew"></svg></td>
                        <td></td><td>&lt;AutoFeld&gt;</td><td class="none"></td>
                      </tr>
                    </tbody>
                  </table>
                </div>
                <div class="recbar">
                  <label for="r2">Datensatz</label><input id="r2" value="1" /><span class="of">von&nbsp; 1</span>
                  <template v-for="(x, i) in navStart('lastDim')" :key="i">
                    <i v-if="x.kind === 'sep'" class="sep"></i>
                    <button v-else class="tool" :aria-label="x.label"><svg class="ic" viewBox="0 0 18 18" v-html="icons[x.name!]"></svg></button>
                  </template>
                </div>
              </section>

              <section class="panel p3">
                <div class="area grey">
                  <table>
                    <colgroup><col class="c-h" /><col /><col class="c-rf" /><col class="c-end3" /></colgroup>
                    <thead><tr><th></th><th>Tatsächliche Nutzung</th><th>"Rest durch Abzug"-Fläche</th><th></th></tr></thead>
                    <tbody>
                      <tr>
                        <td class="rh"><svg class="ic" viewBox="0 2 18 12" v-html="icons.rowCurNew"></svg></td>
                        <td>890&nbsp;&nbsp; Sumpf</td><td></td><td class="none"></td>
                      </tr>
                    </tbody>
                  </table>
                </div>
                <div class="recbar">
                  <button v-for="(x, i) in navEnd" :key="i" class="tool" :aria-label="x.label"><svg class="ic" viewBox="0 0 18 18" v-html="icons[x.name!]"></svg></button>
                </div>
              </section>
            </div>
          </main>
          <div class="outside"></div>
        </div>
      </div>
      <div class="vscroll">
        <span class="vsplit"></span>
        <button class="sb" aria-label="Nach oben"><svg class="ic" viewBox="0 0 18 18" v-html="icons.chevUp"></svg></button>
        <div class="vthumb"><i></i></div>
        <button class="sb end" aria-label="Nach unten"><svg class="ic" viewBox="0 0 18 18" v-html="icons.chev"></svg></button>
      </div>
    </div>

    <div class="foot">
      <div class="tabnav">
        <button v-for="b in tabNav" :key="b[0]" :aria-label="b[1]"><svg class="ic" viewBox="0 0 18 18" v-html="icons[b[0]]"></svg></button>
      </div>
      <div class="tabs">
        <button v-for="tab in tabs" :key="tab.name" class="tab" :class="{ on: tab.active }" :style="{ width: tab.width + 'px' }">
          <svg :viewBox="`0 0 ${tab.width} 18`" class="tabshape">
            <path :d="`M0.500 0L8 16.500H${tab.width - 8}L${tab.width - 0.5} 0`" :fill="tab.active ? '#ffffff' : '#f1e9d8'" stroke="#55534a" />
          </svg>
          <span>{{ tab.name }}</span>
        </button>
      </div>
      <span class="splitter"></span>
      <div class="hscroll">
        <button class="sb" aria-label="Nach links"><svg class="ic" viewBox="0 0 18 18" v-html="icons.chevL"></svg></button>
        <div class="hthumb"><i></i></div>
        <button class="sb end" aria-label="Nach rechts"><svg class="ic" viewBox="0 0 18 18" v-html="icons.chevR"></svg></button>
      </div>
      <span class="hsplit"></span>
    </div>

    <footer class="status">
      <span class="left">Tabelle 2 / 3</span>
      <span class="left">Standard</span>
      <span></span>
      <span>STD</span>
      <span>*</span>
      <span></span>
      <span>Anzahl2=0</span>
      <span class="zoomer">
        <button aria-label="Verkleinern"><svg class="ic" viewBox="0 0 18 18" v-html="icons.minus"></svg></button>
        <input v-model="zoomLevel" type="range" min="0" max="100" aria-label="Maßstab" />
        <button aria-label="Vergrößern"><svg class="ic" viewBox="0 0 18 18" v-html="icons.plus"></svg></button>
      </span>
      <span>90%</span>
    </footer>
    <div class="task"><i class="start"></i><i class="mid"></i><i class="tray"></i></div>
  </div>
</template>

<style>
html, body { height: 100%; background: #fff; }
body { margin: 0; overflow: hidden; }
.ic text { font-family: "DejaVu Sans Condensed", "DejaVu Sans", sans-serif; font-weight: bold; }
.ic text.g { font-size: 8px; }
.ic text.s { font-size: 6px; }
.ic text.s7 { font-size: 8px; }
.ic text.m { font-size: 8px; font-weight: normal; }
.ic text.b { font-size: 13px; }
.ic text.f { font-size: 17px; }
.ic text.k { font-size: 19px; font-style: italic; font-family: "Liberation Serif", serif; }
.ic text.u { font-size: 15px; font-weight: normal; }
.ic text.fx { font-size: 16px; font-style: italic; font-family: "Liberation Serif", serif; }
</style>

<style scoped>
.app {
  --cream: #f1e9d8;
  --grey: #efeeeb;
  --line: #716f64;
  --soft: #c5c1b5;
  --peach: #fdd9ae;
  height: 100vh;
  padding-right: 4px;
  box-sizing: border-box;
  display: flex;
  flex-direction: column;
  font: 11px/13px "DejaVu Sans Condensed", "DejaVu Sans", sans-serif;
  color: #000;
}
.app *, .app *::before { box-sizing: border-box; }
button, input, select { font: inherit; color: inherit; margin: 0; padding: 0; border: 0; border-radius: 0; background: none; }
button { display: flex; align-items: center; justify-content: center; flex: none; }
input, select { min-width: 0; outline: 0; }
.ic { width: 18px; height: 18px; display: block; flex: none; }

.menu {
  height: 19px;
  flex: none;
  display: grid;
  grid-template-columns: 36px 65px 46px 54px 46px 43px 41px 111px 49px 33px 1fr 42px;
  padding-left: 2px;
  background: linear-gradient(90deg, var(--grey) 795px, var(--cream) 795px);
  white-space: nowrap;
}
.menu a { color: inherit; text-decoration: none; line-height: 17px; }
.menu .tool { height: 15px; }

.bar { height: 31px; flex: none; display: flex; border-top: 1px solid var(--soft); border-bottom: 1px solid #fff; }
.bar-1 { background: linear-gradient(90deg, var(--grey) 690px, transparent 690px), linear-gradient(90deg, var(--grey) 795px, transparent 795px) 0 0 / 100% 14px no-repeat, var(--cream); }
.bar-2 { background: linear-gradient(90deg, var(--grey) 565px, var(--cream) 565px); }
.bar-3 { background: linear-gradient(90deg, var(--grey) 310px, var(--cream) 310px); height: 32px; border-bottom-color: #aca899; }
.seg { display: flex; align-items: center; border-left: 1px solid #fff; border-right: 1px solid var(--soft); }
.seg:first-child { border-left: 0; }
.seg-macro { width: 139px; }
.seg-std { width: 826px; }
.seg-rows { width: 184px; }
.seg-ffb { width: 113px; }
.seg-ctrl { width: 451px; }
.seg-design { width: 469px; }
.seg-last { flex: 1; }
.grip { width: 9px; height: 20px; flex: none; background: repeating-linear-gradient(#8f8b80 0 2px, transparent 2px 4px) 3px 0 / 2px 100% no-repeat; }
.seg:first-child .grip { width: 7px; background-position: 0 0; }
.tool { width: 25px; height: 26px; border: 1px solid transparent; border-radius: 3px; }
.tool.active { background: #fff; border-color: #7f9db9; }
.tool.wide { width: 33px; padding-right: 8px; margin-left: 1px; }
.macro { width: 110px; white-space: nowrap; }
.sep { width: 8px; height: 16px; flex: none; background: linear-gradient(#bdb9ad, #bdb9ad) 4px 0 / 1px 100% no-repeat; }
.drop { width: 12px; height: 20px; }
.drop::before { content: ""; border: 3px solid transparent; border-top-color: #000; border-bottom: 0; }
.drop.dim::before { border-top-color: #aaa79b; }
.over {
  width: 11px;
  height: 25px;
  margin: 0 1px 0 auto;
  align-items: flex-end;
  padding-bottom: 4px;
  background: linear-gradient(#efe6cc 10%, #d8d4c8 45%, #c0bdb3 50%, #b0ada4);
}
.over::before { content: ""; border: 3px solid transparent; border-top-color: #000; border-bottom: 0; }
.over.more { flex-direction: column; align-items: center; justify-content: space-between; line-height: 10px; font-weight: bold; }
.over.more::before { order: 2; }

.combo { position: relative; display: flex; height: 21px; border: 1px solid #7f9db9; background: #fff; }
.combo select, .combo input { flex: 1; appearance: none; padding-left: 3px; }
.cb {
  position: absolute;
  right: 1px;
  top: 2px;
  width: 15px;
  height: 15px;
  border-radius: 2px;
  background: linear-gradient(135deg, #d9e4fb, #b4c8f4);
  pointer-events: none;
}
.combo.font { width: 133px; margin-left: 1px; }
.combo.size { width: 53px; margin: 0 7px 0 8px; }
.combo.name { width: 123px; margin-right: 8px; }

.formula {
  display: flex;
  flex: none;
  align-items: center;
  height: 34px;
  padding: 0 6px 0 2px;
  border-top: 1px solid #fff;
  border-bottom: 1px solid #aca899;
  background: var(--cream);
}
.formula .line { flex: 1; height: 21px; margin-left: 9px; background: #fff; border: 1px solid var(--grey); border-top: 2px solid var(--line); border-left-color: var(--line); }

.work { flex: 1; min-height: 0; display: flex; background: var(--grey); }
.sheet { flex: 1; min-width: 0; display: flex; flex-direction: column; }
.cols { height: 17px; display: flex; border-top: 1px solid var(--line); border-bottom: 1px solid var(--line); background: linear-gradient(var(--grey) 60%, var(--cream) 60%); flex: none; }
.cols span { border-right: 1px solid var(--line); text-align: center; line-height: 16px; }
.cols .corner { width: 31px; flex: none; }
.cols .col { flex: 1; }
.cols .rest { width: 21px; flex: none; border: 0; }
.cols .sel { background: linear-gradient(#7ba0d8 55%, #316ac5 55%); color: #fff; font-weight: bold; }
.body { flex: 1; min-height: 0; display: flex; overflow: hidden; }
.rows { width: 31px; flex: none; border-right: 1px solid var(--line); background: linear-gradient(90deg, var(--grey) 14px, var(--cream) 14px); overflow: hidden; }
.rows span { display: block; height: 15px; padding-right: 4px; line-height: 17px; text-align: center; border-bottom: 1px solid var(--line); }
.rows .sel { background: linear-gradient(90deg, #7ba0d8 13px, #316ac5 13px); color: #fff; font-weight: bold; }
.cells { flex: 1; min-width: 0; background: var(--cream); border-right: 1px solid var(--line); padding: 17px 27px 0 16px; overflow: hidden; }
.outside { width: 21px; flex: none; background: #fff; }

.line-1, .line-2 { display: flex; align-items: center; height: 17px; font-size: 12px; line-height: 17px; white-space: nowrap; }
.line-1 { margin-left: -1px; }
.line-2 { margin-top: 33px; }
.l-auftrag { width: 148px; }
.l-nr { width: 90px; font-size: 13px; }
.l-alt { width: 145px; }
.l-gem { width: 76px; }
.l-flur { width: 30px; margin-left: 31px; }
.l-stk { width: 61px; margin-left: 28px; }
.line-2 .l-gem { width: 78px; margin-left: 70px; }
.fld { height: 17px; padding-left: 2px; font-weight: bold; font-size: 12px; border: 1px solid #fff; border-top: 2px solid #8b887b; border-left: 2px solid #8b887b; }
.w-gem { width: 162px; }
.w-flur { width: 50px; }
.w-stk { width: 81px; }
.yellow { background: #ffff99; }
.peach { background: var(--peach); }
.cell-cursor { position: relative; width: 78px; height: 19px; margin: 3px 0 0 55px; border: 3px solid #000; }
.cell-cursor i { position: absolute; right: -5px; bottom: -5px; width: 6px; height: 6px; background: #000; }

.panel { display: flex; flex-direction: column; min-width: 0; }
.p1 { margin-top: 16px; }
.pair { display: grid; grid-template-columns: 1fr 1fr; gap: 16px; margin-top: 19px; }
.area {
  --fill: var(--cream);
  height: 164px;
  border: 1px solid #aca899;
  background: linear-gradient(90deg, var(--cream) 21px, #000 21px 22px, var(--fill) 22px);
}
.orange { --fill: var(--peach); }
.grey { --fill: var(--grey); }
.pair .area { height: 166px; }
table { width: 100%; table-layout: fixed; border-collapse: separate; border-spacing: 0; font-size: 9px; line-height: 12px; }
th { height: 16px; padding: 0; font-weight: normal; border-right: 1px solid var(--line); border-bottom: 1px solid var(--line); background: var(--cream); }
th:first-child { border-right-color: #000; }
th:last-child { border-right: 0; }
td { height: 20px; padding: 0 0 0 2px; border-right: 1px solid #bcbcbc; border-bottom: 1px solid #bcbcbc; white-space: nowrap; }
td.rh { border-color: #000; padding: 0; overflow: hidden; }
td.rh .ic { margin: 3px 0 -3px 2px; }
td.none { border: 0; }
td.mid { text-align: center; }
.pair td { height: 13px; line-height: 11px; }
.pair td.rh .ic { height: 12px; margin: 0 0 0 2px; }
.grey th, .grey td { color: #aca899; }
.c-h { width: 22px; }
.c-gem { width: 175px; }
.c-flur { width: 47px; }
.c-stk { width: 93px; }
.c-karte { width: 127px; }
.c-rest { width: 143px; }
.c-end { width: 2px; }
.c-fl { width: 130px; }
.c-end2 { width: 13px; }
.c-rf { width: 172px; }
.c-end3 { width: 8px; }
input[type="checkbox"] { appearance: none; display: block; width: 11px; height: 11px; margin: 0 auto; border: 1px solid #1c5180; background: linear-gradient(135deg, #dcdcd7, #fff); }
.cellsel { position: relative; display: flex; height: 12px; }
.cellsel select { flex: 1; appearance: none; }
.cellsel .cb { width: 14px; height: 11px; top: 0; }

.recbar { display: flex; align-items: center; height: 19px; border: 1px solid #fff; border-top-color: var(--line); border-left-color: var(--line); padding-left: 3px; }
.recbar label { width: 59px; }
.recbar input { width: 54px; height: 17px; padding-left: 2px; background: #fff; border: 1px solid #000; }
.recbar .of { width: 72px; padding-left: 6px; }
.recbar .tool { width: 23px; height: 17px; border: 0; }
.recbar .sep { height: 13px; }
.recbar .far { margin: 0 1px 0 22px; }
.p3 .recbar { padding-left: 1px; }

.vscroll { width: 17px; margin-right: 2px; display: flex; flex-direction: column; background: linear-gradient(90deg, var(--grey) 9px, #fff 9px); }
.vsplit { height: 4px; background: #000; flex: none; }
.sb { width: 15px; height: 15px; margin: 1px; border: 1px solid #9db8ec; border-radius: 2px; background: linear-gradient(135deg, #d9e4fb, #b4c8f4); }
.sb .ic { width: 15px; height: 15px; }
.vthumb { height: 200px; margin: 1px 1px 0; border: 1px solid #9db8ec; border-radius: 2px; background: #c3d3fd; display: flex; align-items: center; justify-content: center; }
.vthumb i { width: 7px; height: 8px; background: repeating-linear-gradient(#7fa5ee 0 1px, transparent 1px 2px); }
.vscroll .end { margin-top: auto; }

.foot { display: flex; height: 18px; background: var(--cream); border-bottom: 1px solid #fff; flex: none; }
.tabnav { display: flex; gap: 3px; width: 66px; padding-top: 1px; }
.tabnav button { width: 14px; height: 15px; border: 1px solid #cdc9bd; border-radius: 2px; background: var(--grey); }
.tabnav .ic { width: 16px; height: 16px; }
.tabs { display: flex; flex: 401; border-top: 1px solid var(--line); border-right: 1px solid var(--line); min-width: 0; }
.tab { position: relative; height: 16px; margin-right: -5px; }
.tab span { position: relative; white-space: nowrap; }
.tab.on { z-index: 1; font-weight: bold; }
.tabshape { position: absolute; left: 0; top: -1px; width: 100%; height: 18px; }
.splitter { width: 6px; background: #fff; border-right: 2px solid #aca899; border-bottom: 1px solid var(--line); flex: none; }
.hscroll { flex: 524; display: flex; min-width: 0; background: linear-gradient(var(--grey) 9px, #fff 9px); }
.hscroll .sb { height: 15px; }
.hthumb { width: 227px; height: 15px; margin: 1px 0; border: 1px solid #9db8ec; border-radius: 2px; background: linear-gradient(#c3d3fd 65%, #b2c8f2 65%); display: flex; align-items: center; justify-content: center; }
.hthumb i { width: 8px; height: 7px; background: repeating-linear-gradient(90deg, #7fa5ee 0 1px, transparent 1px 2px); }
.hscroll .end { margin-left: auto; }
.hsplit { width: 3px; margin-right: 19px; background: #000; flex: none; }

.status {
  height: 22px;
  flex: none;
  display: grid;
  grid-template-columns: 155px 181px 50px 43px 27px 25px 1fr 149px 44px;
  gap: 4px;
  padding: 2px 5px 1px 1px;
  background: var(--cream);
}
.status > span { display: flex; align-items: center; justify-content: center; border: 1px solid #aca899; border-radius: 2px; padding-top: 2px; }
.status > .left { justify-content: flex-start; padding-left: 4px; }
.status > .zoomer { padding: 0; justify-content: space-between; }
.zoomer button { width: 20px; }
.zoomer input { flex: 1; height: 14px; appearance: none; background: linear-gradient(#6f8796, #6f8796) 52px 0 / 1px 100% no-repeat, linear-gradient(#8f8b80, #8f8b80) 0 6px / 100% 1px no-repeat; }
.zoomer input::-webkit-slider-thumb { appearance: none; width: 9px; height: 9px; border-radius: 50%; border: 1px solid #2f4f70; background: #7fa2bd; }

.task { height: 4px; display: flex; flex: none; }
.task .start { width: 92px; background: linear-gradient(#5fae4c, #3c8a34); }
.task .mid { flex: 1; background: linear-gradient(#2f6fe0, #1d56c8); }
.task .tray { width: 165px; background: linear-gradient(#0a6fd0, #1fb5f5 50%); }
</style>
